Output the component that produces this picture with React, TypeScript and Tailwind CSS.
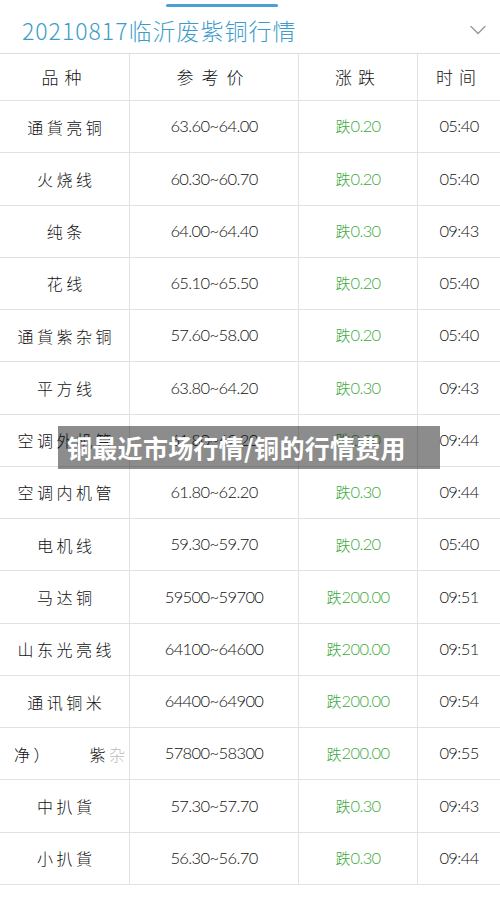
import { ChevronDown } from 'lucide-react';

const rows: [string, string, string, string][] = [
  ['通 貨 亮 铜', '63.60~64.00', '0.20', '05:40'],
  ['火 烧 线', '60.30~60.70', '0.20', '05:40'],
  ['纯 条', '64.00~64.40', '0.30', '09:43'],
  ['花 线', '65.10~65.50', '0.20', '05:40'],
  ['通 貨 紫 杂 铜', '57.60~58.00', '0.20', '05:40'],
  ['平 方 线', '63.80~64.20', '0.30', '09:43'],
  ['空 调 外 机 管', '61.80~62.20', '0.30', '09:44'],
  ['空 调 内 机 管', '61.80~62.20', '0.30', '09:44'],
  ['电 机 线', '59.30~59.70', '0.20', '05:40'],
  ['马 达 铜', '59500~59700', '200.00', '09:51'],
  ['山 东 光 亮 线', '64100~64600', '200.00', '09:51'],
  ['通 讯 铜 米', '64400~64900', '200.00', '09:54'],
  ['', '57800~58300', '200.00', '09:55'],
  ['中 扒 貨', '57.30~57.70', '0.30', '09:43'],
  ['小 扒 貨', '56.30~56.70', '0.30', '09:44'],
];

const cjk = "font-['Noto_Sans_CJK_SC',sans-serif]";
const num = "font-['Lato','Noto_Sans',sans-serif] font-light tracking-[-0.6px]";

export default function App() {
  return (
    <div className="w-[500px] h-[897px] bg-white overflow-hidden">
      {/* top tab strip */}
      <div className="h-[7px] flex items-start">
        <div className="ml-[166px] mt-[4px] h-[3px] w-[112px] rounded-full bg-[#4a9fd4]" />
      </div>

      {/* title */}
      <div className="h-[47px] flex items-center justify-between pl-[22px] pr-[8px] border-b border-[#dedede]">
        <span className={`${cjk} font-light text-[23px] text-[#3c9ccb] tracking-[1px]`}>20210817临沂废紫铜行情</span>
        <ChevronDown className="h-7 w-7 text-[#9a9a9a]" strokeWidth={1.25} />
      </div>

      <div className="relative">
        {/* header */}
        <div className={`grid grid-cols-[130px_169px_119px_1fr] h-[47px] border-b border-[#e2e2e2] ${cjk} font-light text-[17px] text-[#111]`}>
          <div className="flex items-center justify-center border-r border-[#e2e2e2] tracking-[6px]">品种</div>
          <div className="flex items-center justify-center border-r border-[#e2e2e2] tracking-[8px]">参考价</div>
          <div className="flex items-center justify-center border-r border-[#e2e2e2] tracking-[6px]">涨跌</div>
          <div className="flex items-center justify-center tracking-[6px]">时间</div>
        </div>

        {rows.map(([name, price, change, time], i) => (
          <div key={i} className="grid grid-cols-[130px_169px_119px_1fr] h-[52.27px] border-b border-[#e2e2e2]">
            <div className={`flex items-center justify-center border-r border-[#e2e2e2] ${cjk} font-light text-[16px] text-[#111] whitespace-pre`}>
              {name === '' ? (
                <div className="flex w-full items-center justify-between pl-[14px] pr-[4px]">
                  <span>净 ）</span>
                  <span>紫 <span className="text-[#bbb]">杂</span></span>
                </div>
              ) : name}
            </div>
            <div className={`flex items-center justify-center border-r border-[#e2e2e2] ${num} text-[16.5px] text-[#111]`}>{price}</div>
            <div className="flex items-center justify-center border-r border-[#e2e2e2] text-[#3daa3d]">
              <span className={`${cjk} font-light text-[15px]`}>跌</span>
              <span className={`${num} text-[16.5px]`}>{change}</span>
            </div>
            <div className={`flex items-center justify-center ${num} text-[16.5px] text-[#111]`}>{time}</div>
          </div>
        ))}

        {/* overlay caption */}
        <div className="absolute left-[58px] top-[372px] w-[382px] h-[43px] bg-black/45 flex items-center pl-[9px]">
          <span className={`${cjk} text-[25px] leading-none font-bold text-white tracking-[0.3px]`}>铜最近市场行情/铜的行情费用</span>
        </div>
      </div>
    </div>
  );
}
